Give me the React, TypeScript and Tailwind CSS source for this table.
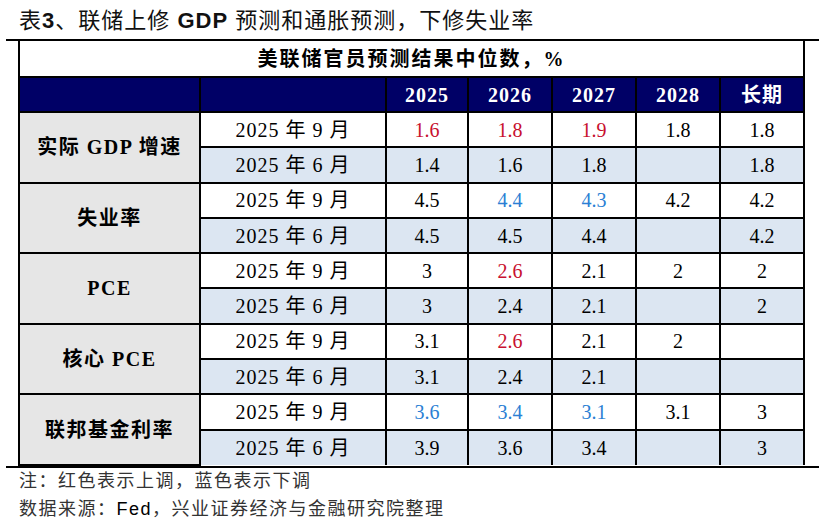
import React from "react";

type Val = { v: string; c?: "r" | "b" };

interface Group {
    label: React.ReactNode;
    sep: Val[];
    jun: Val[];
}

const r = (v: string): Val => ({ v, c: "r" });
const b = (v: string): Val => ({ v, c: "b" });
const n = (v: string): Val => ({ v });

const groups: Group[] = [
    {
        label: <>实际 GDP 增速</>,
        sep: [r("1.6"), r("1.8"), r("1.9"), n("1.8"), n("1.8")],
        jun: [n("1.4"), n("1.6"), n("1.8"), n(""), n("1.8")],
    },
    {
        label: <>失业率</>,
        sep: [n("4.5"), b("4.4"), b("4.3"), n("4.2"), n("4.2")],
        jun: [n("4.5"), n("4.5"), n("4.4"), n(""), n("4.2")],
    },
    {
        label: <>PCE</>,
        sep: [n("3"), r("2.6"), n("2.1"), n("2"), n("2")],
        jun: [n("3"), n("2.4"), n("2.1"), n(""), n("2")],
    },
    {
        label: <>核心 PCE</>,
        sep: [n("3.1"), r("2.6"), n("2.1"), n("2"), n("")],
        jun: [n("3.1"), n("2.4"), n("2.1"), n(""), n("")],
    },
    {
        label: <>联邦基金利率</>,
        sep: [b("3.6"), b("3.4"), b("3.1"), n("3.1"), n("3")],
        jun: [n("3.9"), n("3.6"), n("3.4"), n(""), n("3")],
    },
];

const years = ["2025", "2026", "2027", "2028", "长期"];

const serif = "font-['Liberation_Serif','Noto_Sans_CJK_SC',serif]";
const sans = "font-['Liberation_Sans','Noto_Sans_CJK_SC',sans-serif]";

function colorOf(c?: "r" | "b") {
    if (c === "r") return "text-[#c8102e]";
    if (c === "b") return "text-[#2b7fd4]";
    return "text-black";
}

function DataRow({ group, jun, last }: { group: Group; jun: boolean; last: boolean }) {
    const vals = jun ? group.jun : group.sep;
    const bg = jun ? "bg-[#dce6f2]" : "bg-white";
    const bb = last ? "border-b-0" : "";
    return (
        <tr className="h-[35.3px]">
            {!jun && (
                <td
                    rowSpan={2}
                    className="border-2 border-black bg-[#e6e6e6] text-center text-[20px] font-bold tracking-[1.5px]"
                >
                    {group.label}
                </td>
            )}
            <td className={`border-2 border-black ${bg} ${bb} text-center text-[20px] tracking-[1px]`}>
                {jun ? "2025 年 6 月" : "2025 年 9 月"}
            </td>
            {vals.map((x, i) => (
                <td
                    key={i}
                    className={`border-2 border-black ${bg} ${bb} text-center text-[20px] ${colorOf(x.c)}`}
                >
                    {x.v}
                </td>
            ))}
        </tr>
    );
}

export default function App() {
    return (
        <div className={`w-[819px] h-[523px] bg-white overflow-hidden ${sans}`}>
            <div className="h-[39px] pt-[6px] pl-[19px] text-[22px] leading-[30px] tracking-[1px] text-[#111]">
                表<span className="font-bold">3</span>、联储上修 <span className="font-bold">GDP</span> 预测和通胀预测，下修失业率
            </div>

            <div className="ml-[6px] border-y-2 border-black">
                <table className={`ml-[12px] w-[785px] border-collapse table-fixed ${serif}`}>
                    <colgroup>
                        <col className="w-[181px]" />
                        <col className="w-[186px]" />
                        <col className="w-[82px]" />
                        <col className="w-[84px]" />
                        <col className="w-[84px]" />
                        <col className="w-[84px]" />
                        <col className="w-[84px]" />
                    </colgroup>
                    <tbody>
                        <tr className="h-[36px]">
                            <td
                                colSpan={7}
                                className="border-2 border-t-0 border-black bg-white text-center text-[20px] font-bold tracking-[2px]"
                            >
                                美联储官员预测结果中位数，%
                            </td>
                        </tr>
                        <tr className="h-[35px] bg-[#000066]">
                            <td className="border-2 border-black"></td>
                            <td className="border-2 border-black"></td>
                            {years.map((y) => (
                                <td
                                    key={y}
                                    className="border-2 border-black text-center text-[20px] font-bold text-white tracking-[1px]"
                                >
                                    {y}
                                </td>
                            ))}
                        </tr>
                        {groups.map((g, gi) => (
                            <React.Fragment key={gi}>
                                <DataRow group={g} jun={false} last={false} />
                                <DataRow group={g} jun={true} last={gi === groups.length - 1} />
                            </React.Fragment>
                        ))}
                    </tbody>
                </table>
            </div>

            <div className="pl-[19px] text-[18px] tracking-[1.5px] text-[#333]">
                <div className="h-[26px] leading-[26px]">注：红色表示上调，蓝色表示下调</div>
                <div className="h-[30px] leading-[30px]">
                    数据来源：<span className="text-black">Fed</span>，兴业证券经济与金融研究院整理
                </div>
            </div>
        </div>
    );
}
